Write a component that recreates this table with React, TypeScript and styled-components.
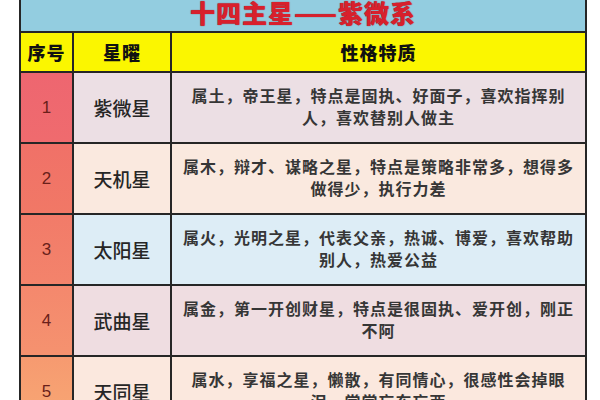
import { Fragment } from "react";
import styled, { createGlobalStyle } from "styled-components";

const GlobalStyle = createGlobalStyle`
  html, body {
    margin: 0;
    padding: 0;
    background: #ffffff;
    overflow: hidden;
  }
`;

type Star = {
  no: number;
  name: string;
  lines: string[];
  numBg: string;
  bg: string;
};

const stars: Star[] = [
  {
    no: 1,
    name: "紫微星",
    lines: ["属土，帝王星，特点是固执、好面子，喜欢指挥别", "人，喜欢替别人做主"],
    numBg: "linear-gradient(180deg, #ee6670 0%, #ef6b6e 100%)",
    bg: "#ecdfe4",
  },
  {
    no: 2,
    name: "天机星",
    lines: ["属木，辩才、谋略之星，特点是策略非常多，想得多", "做得少，执行力差"],
    numBg: "linear-gradient(180deg, #f07168 0%, #f17866 100%)",
    bg: "#fae9df",
  },
  {
    no: 3,
    name: "太阳星",
    lines: ["属火，光明之星，代表父亲，热诚、博爱，喜欢帮助", "别人，热爱公益"],
    numBg: "linear-gradient(180deg, #f27b69 0%, #f3836b 100%)",
    bg: "#ddedf6",
  },
  {
    no: 4,
    name: "武曲星",
    lines: ["属金，第一开创财星，特点是很固执、爱开创，刚正", "不阿"],
    numBg: "linear-gradient(180deg, #f4886d 0%, #f5926f 100%)",
    bg: "#efdde1",
  },
  {
    no: 5,
    name: "天同星",
    lines: ["属水，享福之星，懒散，有同情心，很感性会掉眼", "泪，常常忘东忘西"],
    numBg: "linear-gradient(180deg, #f69a70 0%, #f8a874 100%)",
    bg: "#fbe8de",
  },
];

const Page = styled.div`
  padding-left: 19px;
  font-family: "Noto Sans CJK SC", "Liberation Sans", sans-serif;
`;

const Table = styled.div`
  width: 564px;
  display: grid;
  grid-template-columns: 51px 96px 1fr;
  grid-template-rows: 31px 38px;
  grid-auto-rows: 69px;
  gap: 2px;
  padding: 0 2px;
  background: #262626;
`;

const Title = styled.div`
  grid-column: 1 / -1;
  background: #93cde0;
  color: #d8202c;
  font-size: 25px;
  font-weight: 900;
  letter-spacing: 1px;
  text-align: center;
  line-height: 25px;
  text-shadow: 0 0 1px #8a1018;
`;

const HeadCell = styled.div`
  background: #fbf600;
  color: #111;
  font-size: 18px;
  font-weight: 900;
  letter-spacing: 1px;
  display: flex;
  align-items: center;
  justify-content: center;
`;

const NumCell = styled.div<{ $bg: string }>`
  background: ${(p) => p.$bg};
  color: #6a1f1a;
  font-family: "Liberation Sans", Arial, sans-serif;
  font-size: 17px;
  display: flex;
  align-items: center;
  justify-content: center;
`;

const NameCell = styled.div<{ $bg: string }>`
  background: ${(p) => p.$bg};
  color: #262626;
  font-size: 19px;
  font-weight: 500;
  display: flex;
  align-items: center;
  justify-content: center;
`;

const DescCell = styled.div<{ $bg: string }>`
  background: ${(p) => p.$bg};
  display: flex;
  flex-direction: column;
  align-items: center;
  justify-content: center;
  padding-bottom: 4px;
`;

const DescLine = styled.div`
  color: #363636;
  font-size: 16px;
  font-weight: 700;
  letter-spacing: 1px;
  line-height: 22px;
  white-space: nowrap;
`;

export default function App() {
  return (
    <>
      <GlobalStyle />
      <Page>
        <Table>
          <Title>十四主星——紫微系</Title>
          <HeadCell>序号</HeadCell>
          <HeadCell>星曜</HeadCell>
          <HeadCell>性格特质</HeadCell>
          {stars.map((s) => (
            <Fragment key={s.no}>
              <NumCell $bg={s.numBg}>{s.no}</NumCell>
              <NameCell $bg={s.bg}>{s.name}</NameCell>
              <DescCell $bg={s.bg}>
                {s.lines.map((l) => (
                  <DescLine key={l}>{l}</DescLine>
                ))}
              </DescCell>
            </Fragment>
          ))}
        </Table>
      </Page>
    </>
  );
}
